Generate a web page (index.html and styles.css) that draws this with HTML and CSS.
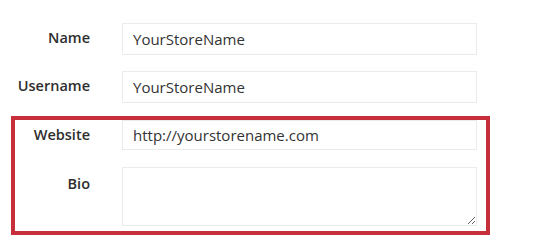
FILE: index.html
```html
<!DOCTYPE html>
<html lang="en">
<head>
  <meta charset="UTF-8" />
  <title>Profile</title>
  <link rel="stylesheet" href="styles.css">
</head>
<body>
  <form class="profile-form">
    <div class="row">
      <label class="label" for="name">Name</label>
      <input class="field" type="text" id="name" value="YourStoreName" />
    </div>
    <div class="row">
      <label class="label" for="username">Username</label>
      <input class="field" type="text" id="username" value="YourStoreName" />
    </div>

    <!-- выделенный блок -->
    <div class="highlight">
      <div class="row">
        <label class="label" for="website">Website</label>
        <input class="field field-short" type="text" id="website" value="http://yourstorename.com" />
      </div>
      <div class="row">
        <label class="label label-bio" for="bio">Bio</label>
        <textarea class="field bio" id="bio"></textarea>
      </div>
    </div>
  </form>
</body>
</html>
```

FILE: styles.css
```css
body {
  margin: 0;
  font-family: 'Open Sans', 'Noto Sans', sans-serif;
  background: #fff;
  color: #333;
}

.profile-form {
  display: flex;
  flex-direction: column;
  gap: 16px;
  padding-top: 23px;
}

.row {
  display: grid;
  grid-template-columns: 90px 355px;
  column-gap: 32px;
  align-items: start;
}

.label {
  text-align: right;
  font-size: 14.5px;
  font-weight: 600;
  line-height: 20px;
  padding-top: 5px;
  color: #2e2e2e;
}

.field {
  box-sizing: border-box;
  width: 355px;
  height: 32px;
  margin: 0;
  padding: 0 10px;
  border: 1px solid #ebebeb;
  font-family: 'Open Sans', 'Noto Sans', sans-serif;
  font-size: 15px;
  color: #333;
  background: #fff;
  outline: none;
}

.field-short {
  height: 30px;
}

/* Красная рамка */
.highlight {
  display: flex;
  flex-direction: column;
  gap: 17px;
  box-sizing: border-box;
  width: 479px;
  margin-top: -3px;
  margin-left: 11px;
  padding: 0 0 5px;
  border: 4px solid #c62f3a;
}

.highlight .row {
  grid-template-columns: 75px 355px;
}

.label-bio {
  padding-top: 7px;
}

.bio {
  height: 59px;
  padding: 6px 10px;
  resize: both;
}
```
